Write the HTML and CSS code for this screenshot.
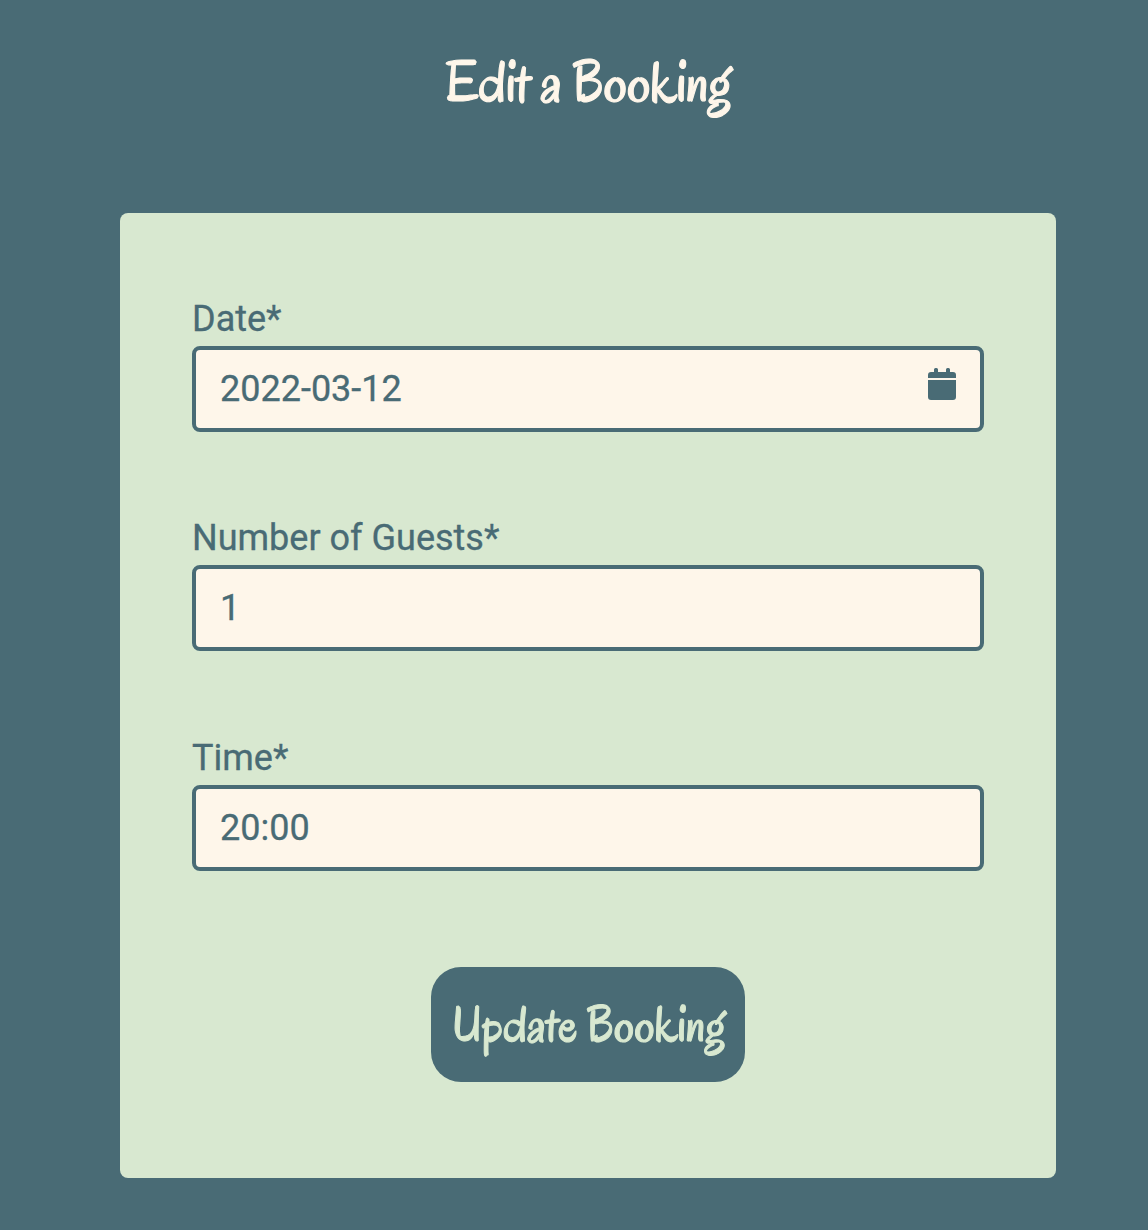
FILE: index.html
```html
<!DOCTYPE html>
<html lang="en">
<head>
<meta charset="utf-8">
<title>Edit a Booking</title>
<link rel="stylesheet" href="styles.css">
</head>
<body>
<main class="page">
  <h1 class="title">Edit a Booking</h1>
  <form class="card">
    <div class="field">
      <label class="label" for="date">Date*</label>
      <div class="control">
        <input class="input" id="date" type="text" value="2022-03-12">
        <svg class="calendar" viewBox="0 0 28 32" aria-hidden="true">
          <path d="M0 10V7a3 3 0 0 1 3-3h3V1.500a1.500 1.500 0 0 1 1.500-1.500h1A1.500 1.500 0 0 1 10 1.500V4h8V1.500A1.500 1.500 0 0 1 19.500 0h1A1.500 1.500 0 0 1 22 1.500V4h3a3 3 0 0 1 3 3v3zM0 12h28v17a3 3 0 0 1-3 3H3a3 3 0 0 1-3-3z"/>
        </svg>
      </div>
    </div>
    <div class="field">
      <label class="label" for="guests">Number of Guests*</label>
      <div class="control"><input class="input" id="guests" type="text" value="1"></div>
    </div>
    <div class="field field-last">
      <label class="label" for="time">Time*</label>
      <div class="control"><input class="input" id="time" type="text" value="20:00"></div>
    </div>
    <button class="button" type="button">Update Booking</button>
  </form>
</main>
</body>
</html>
```
FILE: styles.css
```css
* { box-sizing: border-box; }
body {
  margin: 0;
  min-height: 1230px;
  background: #496b75;
  color: #496b75;
  font-family: Roboto, "Liberation Sans", sans-serif;
}
.page {
  display: flex;
  flex-direction: column;
  width: 936px;
  margin-left: 120px;
}
.title {
  display: flex;
  justify-content: center;
  height: 213px;
  margin: 0;
  padding: 53px 0 0 1px;
  color: #fef6ea;
  font: 400 57.6px/60px Oregano, "Caveat Brush", Lato, sans-serif;
  -webkit-text-stroke: 1.1px currentColor;
  white-space: nowrap;
}
.card {
  display: flex;
  flex-direction: column;
  height: 965px;
  padding: 85px 72px 0;
  border-radius: 8px;
  background: #d8e8d0;
}
.field { height: 219px; }
.field-last { margin-top: 1px; }
.label {
  display: block;
  height: 48px;
  font-size: 36px;
  line-height: 42px;
  -webkit-text-stroke: .3px currentColor;
}
.control { position: relative; height: 86px; }
.input {
  display: block;
  width: 100%;
  height: 100%;
  padding: 0 24px;
  border: 4px solid #496b75;
  border-radius: 8px;
  outline: 0;
  background: #fef6ea;
  color: inherit;
  font: 36px/42px Roboto, "Liberation Sans", sans-serif;
  -webkit-text-stroke: .3px currentColor;
}
.calendar {
  position: absolute;
  top: 22px;
  right: 28px;
  width: 28px;
  height: 32px;
  fill: #496b75;
}
.button {
  display: flex;
  align-items: center;
  justify-content: center;
  align-self: center;
  width: 314px;
  height: 115px;
  margin-top: 11px;
  padding: 0 0 0 1px;
  border: 0;
  border-radius: 30px;
  background: #496b75;
  color: #d8e8d0;
  font: 400 50px/54px Oregano, "Caveat Brush", Lato, sans-serif;
  letter-spacing: .12px;
  -webkit-text-stroke: 1px currentColor;
  white-space: nowrap;
}
```
